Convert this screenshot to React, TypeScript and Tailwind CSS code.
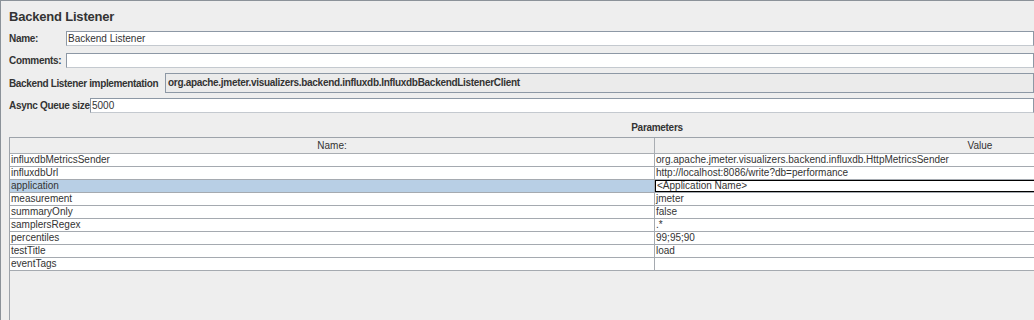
import React from "react";

const params: [string, string][] = [
  ["influxdbMetricsSender", "org.apache.jmeter.visualizers.backend.influxdb.HttpMetricsSender"],
  ["influxdbUrl", "http://localhost:8086/write?db=performance"],
  ["application", "<Application Name>"],
  ["measurement", "jmeter"],
  ["summaryOnly", "false"],
  ["samplersRegex", ".*"],
  ["percentiles", "99;95;90"],
  ["testTitle", "load"],
  ["eventTags", ""],
];

const Field = ({ label, labelW, value, className = "" }: { label: string; labelW: string; value: string; className?: string }) => (
  <div className={`flex items-center ${className}`}>
    <div className={`${labelW} shrink-0 text-[10px] font-bold tracking-[-0.3px] text-[#333]`}>{label}</div>
    <div className="h-[15px] flex-1 bg-white border border-[#8d98a5] border-b-[#c4c9cf] text-[10px] leading-[13px] pl-[1px] text-[#333]">
      {value}
    </div>
  </div>
);

export default function App() {
  return (
    <div className="w-[1034px] h-[320px] overflow-hidden bg-[#eeeeee] border-l border-t border-[#8b9299] font-['Liberation_Sans',Arial,sans-serif] text-[#333]">
      <div className="pl-[8px]">
        <div className="pt-[8px] h-[24px] text-[13px] leading-[16px] font-bold tracking-[-0.2px] text-[#333]">Backend Listener</div>

        <Field label="Name:" labelW="w-[57px]" value="Backend Listener" className="mt-[6px]" />
        <Field label="Comments:" labelW="w-[57px]" value="" className="mt-[7px]" />

        <div className="flex items-center mt-[5px]">
          <div className="w-[156px] shrink-0 text-[10px] font-bold tracking-[-0.35px] text-[#333]">Backend Listener implementation</div>
          <div className="h-[20px] flex-1 bg-[#ebebeb] border border-[#8d98a5] text-[10px] leading-[18px] font-bold tracking-[-0.3px] pl-[2px] text-[#333]">
            org.apache.jmeter.visualizers.backend.influxdb.InfluxdbBackendListenerClient
          </div>
        </div>

        <Field label="Async Queue size" labelW="w-[81px]" value="5000" className="mt-[5px]" />

        <div className="w-[1296px]">
          <div className="mt-[9px] h-[12px] text-center text-[10px] leading-[12px] font-bold tracking-[-0.3px]">Parameters</div>
          <div className="mt-[3px] h-[200px] border-l border-t border-[#9da3aa] bg-[#eeeeee]">
            <div className="grid grid-cols-[645px_1fr] h-[16px] border-b border-[#a9adb2] text-[10px] leading-[15px] text-[#333]">
              <div className="text-center border-r border-[#a9adb2]">Name:</div>
              <div className="text-center">Value</div>
            </div>
            {params.map(([name, value]) => {
              const sel = name === "application";
              return (
                <div key={name} className="grid grid-cols-[645px_1fr] h-[13px] border-b border-[#a5aab0] text-[10px] leading-[12px] text-[#333]">
                  <div className={`pl-[1px] border-r border-[#a5aab0] ${sel ? "bg-[#b8cfe5]" : "bg-white"}`}>{name}</div>
                  <div className={`pl-[1px] bg-white ${sel ? "border border-black leading-[10px]" : ""}`}>{value}</div>
                </div>
              );
            })}
          </div>
        </div>
      </div>
    </div>
  );
}
